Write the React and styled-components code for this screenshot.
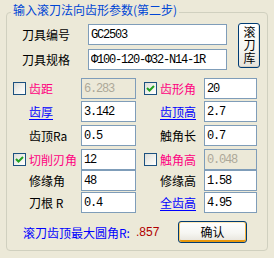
import React from "react";
import styled, { createGlobalStyle } from "styled-components";

const CJK = `"Noto Sans CJK SC", "Noto Sans", sans-serif`;
const MONO = `"Liberation Mono", "Noto Sans CJK SC", monospace`;

const Global = createGlobalStyle`
  html, body { margin: 0; padding: 0; background: #ECE9D8; }
  body { width: 274px; height: 258px; overflow: hidden; font-family: ${CJK}; font-size: 12px; }
`;

const Window = styled.div`
  width: 274px;
  height: 258px;
  box-sizing: border-box;
  padding: 12px 0 0 6px;
  background: #ECE9D8;
`;

const GroupBox = styled.section`
  position: relative;
  box-sizing: border-box;
  width: 262px;
  height: 239px;
  border: 1px solid #D0D0BF;
  border-radius: 4px;
  display: flex;
  flex-direction: column;
`;

const Title = styled.h2`
  position: absolute;
  left: 4px;
  top: -10px;
  margin: 0;
  padding: 0 2px;
  background: #ECE9D8;
  font: normal 12px/14px ${CJK};
  color: #0046D5;
  white-space: nowrap;
`;

const Header = styled.div`
  display: grid;
  grid-template-columns: 55px 139px 22px;
  grid-template-rows: 21px 21px;
  column-gap: 11px;
  row-gap: 4px;
  margin: 11px 0 0 15px;
`;

const Label = styled.span`
  display: block;
  height: 21px;
  line-height: 21px;
  white-space: nowrap;
  font-size: 12px;
  color: ${(p) => (p.$kind === "pink" ? "#FF0080" : p.$kind === "link" ? "#0000FF" : "#000")};
  text-decoration: ${(p) => (p.$kind === "link" ? "underline" : "none")};
  text-underline-offset: 2px;
  grid-column: ${(p) => p.$col || "auto"};
`;

const Field = styled.input`
  box-sizing: border-box;
  display: block;
  width: 100%;
  height: 21px;
  margin: 0;
  padding: 0 0 0 2px;
  border: 1px solid #7F9DB9;
  border-radius: 0;
  background: ${(p) => (p.disabled ? "#ECE9D8" : "#FFFFFF")};
  color: ${(p) => (p.disabled ? "#ACA899" : "#000")};
  -webkit-text-fill-color: ${(p) => (p.disabled ? "#ACA899" : "#000")};
  font: 12px/19px ${MONO};
  letter-spacing: -1.2px;
  outline: none;
  grid-column: ${(p) => p.$col || "auto"};
`;

const XpButton = styled.button`
  box-sizing: border-box;
  margin: 0;
  padding: 0;
  border: 1px solid #003C74;
  border-radius: 3px;
  background: linear-gradient(180deg, #FFFFFF 0%, #F6F6F2 55%, #E6E3DA 100%);
  font: 12px/14px ${CJK};
  color: #000;
  box-shadow: ${(p) =>
    p.$default
      ? "inset 1px 0 0 #FBCB68, inset -1px 0 0 #F6B33E, inset 0 1px 0 #FFE9B8, inset 0 -2px 0 #E8980C"
      : "inset 0 -1px 0 #D6D0C5, inset -1px 0 0 #E2DED4"};
`;

const LibraryButton = styled(XpButton)`
  grid-column: 3;
  grid-row: 1 / 3;
  align-self: start;
  height: 45px;
  margin-top: -1px;
  display: flex;
  align-items: center;
  justify-content: center;
`;

const VerticalText = styled.span`
  writing-mode: vertical-lr;
  text-orientation: upright;
  letter-spacing: 1px;
  line-height: 12px;
`;

const Params = styled.div`
  display: grid;
  grid-template-columns: 16px 52px 55px 8px 16px 44px 53px;
  grid-template-rows: 23px 24px 24px 21px 22px 21px;
  align-items: start;
  margin: 8px 0 0 6px;
`;

const Box = styled.span`
  box-sizing: border-box;
  display: flex;
  align-items: center;
  justify-content: center;
  width: 13px;
  height: 13px;
  margin-top: 4px;
  border: 1px solid #1C5180;
  background: linear-gradient(135deg, #DCDCD7 0%, #F2F2EE 55%, #FFFFFF 100%);
  grid-column: ${(p) => p.$col};
`;

const Footer = styled.div`
  display: flex;
  align-items: center;
  height: 22px;
  margin: 8px 0 0 0;
  padding: 0 20px 0 16px;
`;

const FooterLabel = styled.span`
  color: #0000FF;
  font-size: 12px;
  white-space: nowrap;
`;

const FooterValue = styled.span`
  margin-left: 6px;
  color: #B00000;
  font: 12px "Liberation Sans", sans-serif;
`;

const OkButton = styled(XpButton)`
  margin-left: auto;
  width: 69px;
  height: 22px;
`;

function CheckBox({ checked, col }) {
  return (
    <Box $col={col}>
      {checked && (
        <svg width="9" height="9" viewBox="0 0 9 9">
          <path d="M1 4 L3.5 6.5 L8 2" fill="none" stroke="#21A121" strokeWidth="2" />
        </svg>
      )}
    </Box>
  );
}

const rows = [
  [
    { check: false, label: "齿距", kind: "pink", value: "6.283", disabled: true },
    { check: true, label: "齿形角", kind: "pink", value: "20" },
  ],
  [
    { label: "齿厚", kind: "link", value: "3.142" },
    { label: "齿顶高", kind: "link", value: "2.7" },
  ],
  [
    { label: "齿顶Ra", value: "0.5" },
    { label: "触角长", value: "0.7" },
  ],
  [
    { check: true, label: "切削刃角", kind: "pink", value: "12" },
    { check: false, label: "触角高", kind: "pink", value: "0.048", disabled: true },
  ],
  [
    { label: "修缘角", value: "48" },
    { label: "修缘高", value: "1.58" },
  ],
  [
    { label: "刀根 R", value: "0.4" },
    { label: "全齿高", kind: "link", value: "4.95" },
  ],
];

function Cell({ item, base }) {
  return (
    <>
      {"check" in item && <CheckBox checked={item.check} col={base} />}
      <Label $kind={item.kind} $col={base + 1}>{item.label}</Label>
      <Field $col={base + 2} defaultValue={item.value} disabled={item.disabled} readOnly />
    </>
  );
}

export default function App() {
  return (
    <>
      <Global />
      <Window>
        <GroupBox>
          <Title>输入滚刀法向齿形参数(第二步)</Title>
          <Header>
            <Label>刀具编号</Label>
            <Field defaultValue="GC2503" readOnly />
            <LibraryButton>
              <VerticalText>滚刀库</VerticalText>
            </LibraryButton>
            <Label>刀具规格</Label>
            <Field defaultValue="Φ100-120-Φ32-N14-1R" readOnly />
          </Header>
          <Params>
            {rows.map(([l, r], i) => (
              <React.Fragment key={i}>
                <Cell item={l} base={1} />
                <Cell item={r} base={5} />
              </React.Fragment>
            ))}
          </Params>
          <Footer>
            <FooterLabel>滚刀齿顶最大圆角R:</FooterLabel>
            <FooterValue>.857</FooterValue>
            <OkButton $default>确认</OkButton>
          </Footer>
        </GroupBox>
      </Window>
    </>
  );
}
